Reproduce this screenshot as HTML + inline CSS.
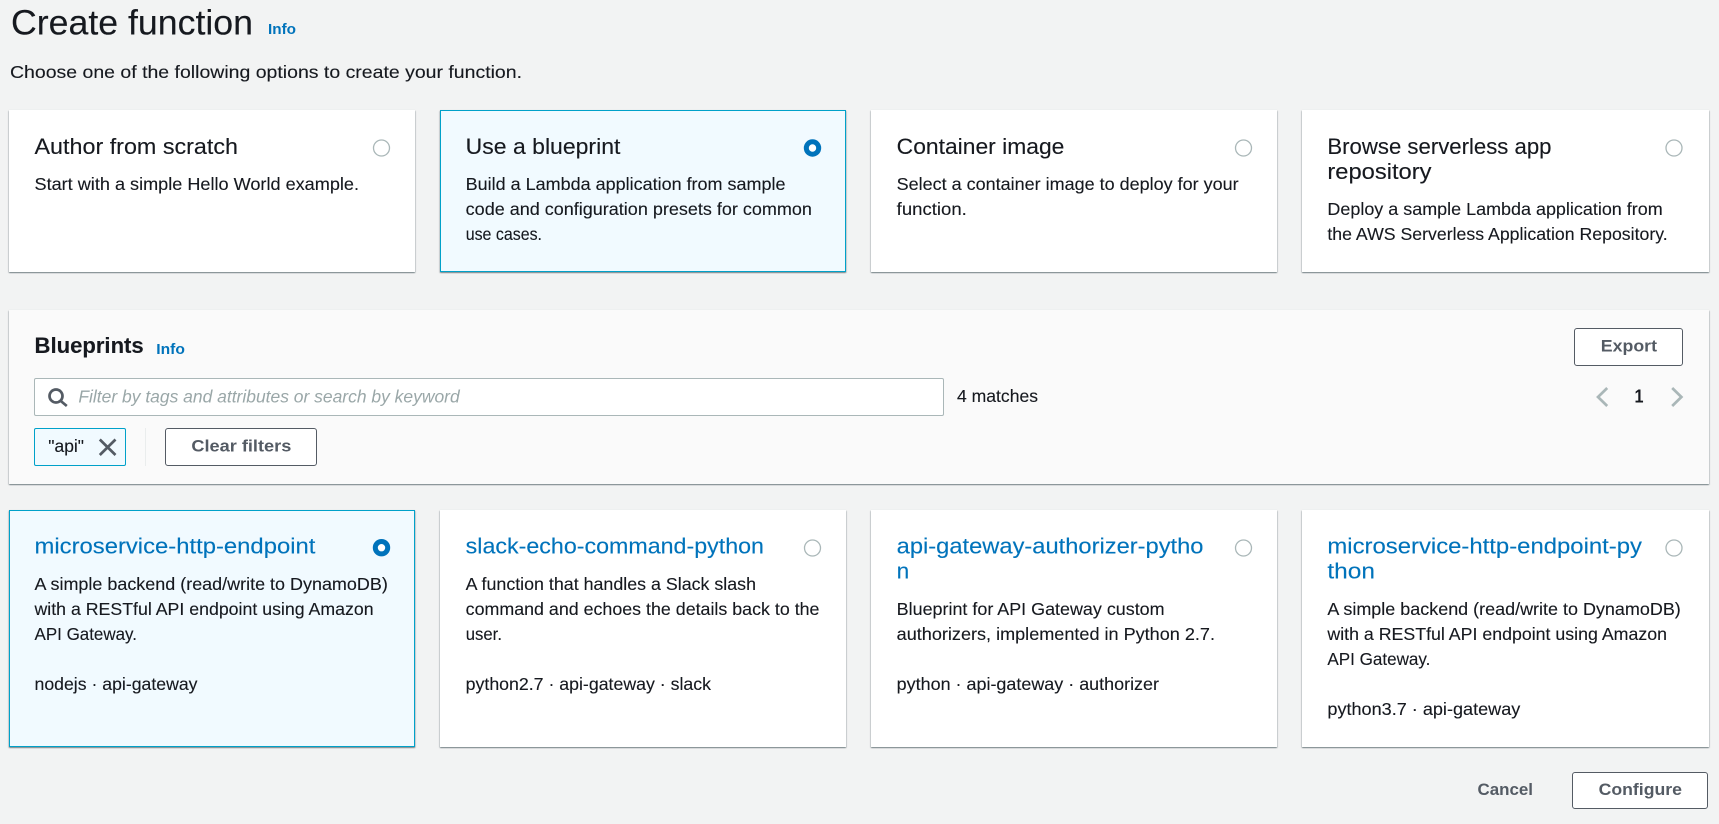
<!DOCTYPE html>
<html lang="en">
<head>
<meta charset="utf-8">
<title>Create function</title>
<style>
html,body{margin:0;padding:0;width:1719px;height:824px;overflow:hidden;background:#f2f3f3;font-family:"Liberation Sans",sans-serif}
.box{position:absolute;box-sizing:border-box}
.card{background:#fff;box-shadow:0 1px 1px 0 rgba(0,28,36,.38),1px 1px 1px 0 rgba(0,28,36,.1),-1px 1px 1px 0 rgba(0,28,36,.1),0 0 1px rgba(0,28,36,.08)}
.sel{background:#f1faff;border:1px solid #00a1c9}
.btn{background:#fff;border:1px solid #545b64;border-radius:3px}
svg{position:absolute;left:0;top:0}
text{font-family:"Liberation Sans",sans-serif;fill:#16191f;stroke:#16191f;stroke-width:.12}
.t{font-size:17.500px}
.h{font-size:22px}
.l{font-size:22px;fill:#0073bb;stroke:#0073bb}
.b{font-weight:700;font-size:17px;fill:#545b64;stroke:none}
.i{font-weight:700;font-size:15px;fill:#0073bb;stroke:none}
</style>
</head>
<body>
<div class="box card" style="left:9px;top:110px;width:406px;height:162px"></div>
<div class="box card sel" style="left:440px;top:109.500px;width:406px;height:162.500px"></div>
<div class="box card" style="left:871px;top:110px;width:406px;height:162px"></div>
<div class="box card" style="left:1302px;top:110px;width:407px;height:162px"></div>

<div class="box card" style="left:9px;top:310px;width:1700px;height:174px;background:#fafafa"></div>
<div class="box" style="left:34px;top:378px;width:910px;height:38px;background:#fff;border:1px solid #aab7b8;border-radius:2px"></div>
<div class="box" style="left:34px;top:428px;width:92px;height:38px;background:#f1faff;border:1px solid #00a1c9;border-radius:2px"></div>
<div class="box" style="left:145px;top:428px;width:1px;height:38px;background:#eaeded"></div>
<div class="box btn" style="left:165px;top:428px;width:152px;height:38px"></div>
<div class="box btn" style="left:1574px;top:328px;width:109px;height:38px"></div>

<div class="box card sel" style="left:9px;top:509.500px;width:406px;height:237.500px"></div>
<div class="box card" style="left:440px;top:510px;width:406px;height:237px"></div>
<div class="box card" style="left:871px;top:510px;width:406px;height:237px"></div>
<div class="box card" style="left:1302px;top:510px;width:407px;height:237px"></div>
<div class="box btn" style="left:1572px;top:772px;width:136px;height:37px"></div>

<svg width="1719" height="824" viewBox="0 0 1719 824">
<text x="11" y="34.300" font-size="35" textLength="242" lengthAdjust="spacingAndGlyphs">Create function</text>
<text class="i" x="268" y="34" textLength="28" lengthAdjust="spacingAndGlyphs">Info</text>
<text class="t" x="10" y="78" textLength="512" lengthAdjust="spacingAndGlyphs">Choose one of the following options to create your function.</text>

<text class="h" x="34.500" y="154" textLength="203.500" lengthAdjust="spacingAndGlyphs">Author from scratch</text>
<text class="t" x="34.500" y="190" textLength="324.500" lengthAdjust="spacingAndGlyphs">Start with a simple Hello World example.</text>

<text class="h" x="465.700" y="154" textLength="154.700" lengthAdjust="spacingAndGlyphs">Use a blueprint</text>
<text class="t" x="465.700" y="190" textLength="319.800" lengthAdjust="spacingAndGlyphs">Build a Lambda application from sample</text>
<text class="t" x="465.700" y="215" textLength="346.200" lengthAdjust="spacingAndGlyphs">code and configuration presets for common</text>
<text class="t" x="465.700" y="240" textLength="76.300" lengthAdjust="spacingAndGlyphs">use cases.</text>

<text class="h" x="896.700" y="154" textLength="167.700" lengthAdjust="spacingAndGlyphs">Container image</text>
<text class="t" x="896.700" y="190" textLength="341.900" lengthAdjust="spacingAndGlyphs">Select a container image to deploy for your</text>
<text class="t" x="896.700" y="215" textLength="70.100" lengthAdjust="spacingAndGlyphs">function.</text>

<text class="h" x="1327.400" y="154" textLength="224.100" lengthAdjust="spacingAndGlyphs">Browse serverless app</text>
<text class="h" x="1327.400" y="179" textLength="104.100" lengthAdjust="spacingAndGlyphs">repository</text>
<text class="t" x="1327.400" y="215" textLength="335.300" lengthAdjust="spacingAndGlyphs">Deploy a sample Lambda application from</text>
<text class="t" x="1327.400" y="240" textLength="340.300" lengthAdjust="spacingAndGlyphs">the AWS Serverless Application Repository.</text>

<text class="h" x="34.500" y="353" font-weight="700" textLength="109.200" lengthAdjust="spacingAndGlyphs">Blueprints</text>
<text class="i" x="156.300" y="354" textLength="28.600" lengthAdjust="spacingAndGlyphs">Info</text>
<text class="t" x="78.400" y="402.700" font-style="italic" style="fill:#9aa7a8;stroke:none" textLength="381.300" lengthAdjust="spacingAndGlyphs">Filter by tags and attributes or search by keyword</text>
<text class="t" x="957" y="402" textLength="81" lengthAdjust="spacingAndGlyphs">4 matches</text>
<text class="b" x="1634.500" y="402.300" font-size="18" style="fill:#16191f;font-size:18px" textLength="9" lengthAdjust="spacingAndGlyphs">1</text>
<text class="b" x="1600.800" y="351.700" textLength="56.200" lengthAdjust="spacingAndGlyphs">Export</text>
<text class="t" x="48.300" y="452" textLength="35.700" lengthAdjust="spacingAndGlyphs">"api"</text>
<text class="b" x="191.400" y="451.700" textLength="99.900" lengthAdjust="spacingAndGlyphs">Clear filters</text>

<text class="l" x="34.500" y="553.300" textLength="280.900" lengthAdjust="spacingAndGlyphs">microservice-http-endpoint</text>
<text class="t" x="34.500" y="590" textLength="353.300" lengthAdjust="spacingAndGlyphs">A simple backend (read/write to DynamoDB)</text>
<text class="t" x="34.500" y="615" textLength="339.100" lengthAdjust="spacingAndGlyphs">with a RESTful API endpoint using Amazon</text>
<text class="t" x="34.500" y="640" textLength="102.500" lengthAdjust="spacingAndGlyphs">API Gateway.</text>
<text class="t" x="34.500" y="690" textLength="163" lengthAdjust="spacingAndGlyphs">nodejs · api-gateway</text>

<text class="l" x="465.700" y="553.300" textLength="298.300" lengthAdjust="spacingAndGlyphs">slack-echo-command-python</text>
<text class="t" x="465.700" y="590" textLength="290.300" lengthAdjust="spacingAndGlyphs">A function that handles a Slack slash</text>
<text class="t" x="465.700" y="615" textLength="353.800" lengthAdjust="spacingAndGlyphs">command and echoes the details back to the</text>
<text class="t" x="465.700" y="640" textLength="36.300" lengthAdjust="spacingAndGlyphs">user.</text>
<text class="t" x="465.700" y="690" textLength="245.300" lengthAdjust="spacingAndGlyphs">python2.7 · api-gateway · slack</text>

<text class="l" x="896.700" y="553.300" textLength="306.800" lengthAdjust="spacingAndGlyphs">api-gateway-authorizer-pytho</text>
<text class="l" x="896.700" y="578.300" textLength="12.600" lengthAdjust="spacingAndGlyphs">n</text>
<text class="t" x="896.700" y="615" textLength="267.900" lengthAdjust="spacingAndGlyphs">Blueprint for API Gateway custom</text>
<text class="t" x="896.700" y="640" textLength="318.300" lengthAdjust="spacingAndGlyphs">authorizers, implemented in Python 2.7.</text>
<text class="t" x="896.700" y="690" textLength="262.300" lengthAdjust="spacingAndGlyphs">python · api-gateway · authorizer</text>

<text class="l" x="1327.400" y="553.300" textLength="314.600" lengthAdjust="spacingAndGlyphs">microservice-http-endpoint-py</text>
<text class="l" x="1327.400" y="578.300" textLength="47.600" lengthAdjust="spacingAndGlyphs">thon</text>
<text class="t" x="1327.400" y="615" textLength="353.400" lengthAdjust="spacingAndGlyphs">A simple backend (read/write to DynamoDB)</text>
<text class="t" x="1327.400" y="640" textLength="339.600" lengthAdjust="spacingAndGlyphs">with a RESTful API endpoint using Amazon</text>
<text class="t" x="1327.400" y="665" textLength="103" lengthAdjust="spacingAndGlyphs">API Gateway.</text>
<text class="t" x="1327.400" y="715" textLength="192.900" lengthAdjust="spacingAndGlyphs">python3.7 · api-gateway</text>

<text class="b" x="1477.500" y="795" textLength="55.500" lengthAdjust="spacingAndGlyphs">Cancel</text>
<text class="b" x="1598.600" y="795" textLength="83.400" lengthAdjust="spacingAndGlyphs">Configure</text>

<g fill="#fff" stroke="#aab7b8" stroke-width="1.300">
<circle cx="381.500" cy="148" r="8"/>
<circle cx="1243.500" cy="148" r="8"/>
<circle cx="1674" cy="148" r="8"/>
<circle cx="812.500" cy="548" r="8"/>
<circle cx="1243.500" cy="548" r="8"/>
<circle cx="1674" cy="548" r="8"/>
</g>
<g fill="#fff" stroke="#0073bb" stroke-width="5">
<circle cx="812.500" cy="148" r="6.200"/>
<circle cx="381.500" cy="547.700" r="6.200"/>
</g>

<g fill="none" stroke="#545b64" stroke-width="2.700">
<circle cx="56" cy="396" r="6.500"/>
<path d="M60.800 401 L66.800 406"/>
<path d="M99.800 439.500 L115.500 455 M115.500 439.500 L99.800 455"/>
</g>
<g fill="none" stroke="#aab7b8" stroke-width="2.700">
<path d="M1607.200 388 L1598 397 L1607.200 406"/>
<path d="M1672.200 388 L1681.400 397 L1672.200 406"/>
</g>
</svg>
</body>
</html>
